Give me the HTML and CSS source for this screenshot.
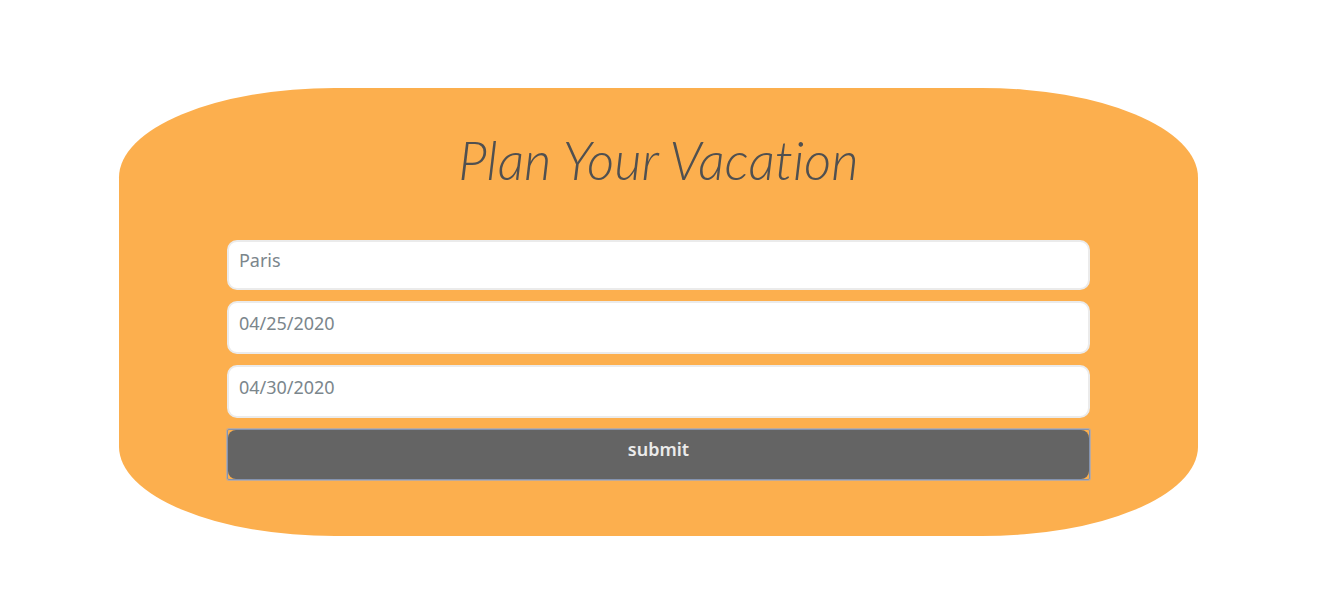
FILE: index.html
```html
<!DOCTYPE html>
<html lang="en">
<head>
<meta charset="utf-8">
<meta name="viewport" content="width=device-width, initial-scale=1">
<title>Plan Your Vacation</title>
<link rel="stylesheet" href="styles.css">
</head>
<body>
<main class="planner">
  <h1 class="planner-title">Plan Your Vacation</h1>
  <form class="planner-form">
    <input class="field field-city" type="text" placeholder="Paris" aria-label="Destination">
    <input class="field" type="text" placeholder="04/25/2020" aria-label="Departure date">
    <input class="field" type="text" placeholder="04/30/2020" aria-label="Return date">
    <div class="submit-ring">
      <button class="submit" type="button">submit</button>
    </div>
  </form>
</main>
</body>
</html>
```
FILE: styles.css
```css
* {
  box-sizing: border-box;
}

body {
  margin: 0;
  padding: 88px 146px 80px 119px;
  background: #fff;
  font-family: "Noto Sans", "Open Sans", sans-serif;
}

.planner {
  padding: 40px 10% 56px;
  border-radius: 20%;
  background: #fcaf4e;
}

.planner-title {
  margin: 0 0 48px;
  color: #505050;
  font-family: Lato, sans-serif;
  font-size: 53px;
  font-style: italic;
  font-variant-ligatures: none;
  font-weight: 300;
  line-height: 64px;
  text-align: center;
}

.planner-form {
  display: flex;
  flex-direction: column;
  gap: 11px;
}

.field {
  width: 100%;
  height: 53px;
  padding: 0 10px 10px;
  border: 2px solid #ebebeb;
  border-radius: 10px;
  background: #fff;
  color: #505050;
  font-family: inherit;
  font-size: 18px;
}

.field-city {
  height: 50px;
}

.field::placeholder {
  color: #7b868c;
  opacity: 1;
}

.submit-ring {
  border: 1px solid #8393b0;
  border-radius: 2px;
  box-shadow: 0 0 0 1px #bdaa9c;
}

.submit {
  display: block;
  width: 100%;
  height: 49px;
  padding: 0 0 12px;
  border: 0;
  border-radius: 8px;
  background: #646464;
  color: #ebebeb;
  font-family: inherit;
  font-size: 18px;
  font-weight: 600;
}
```
